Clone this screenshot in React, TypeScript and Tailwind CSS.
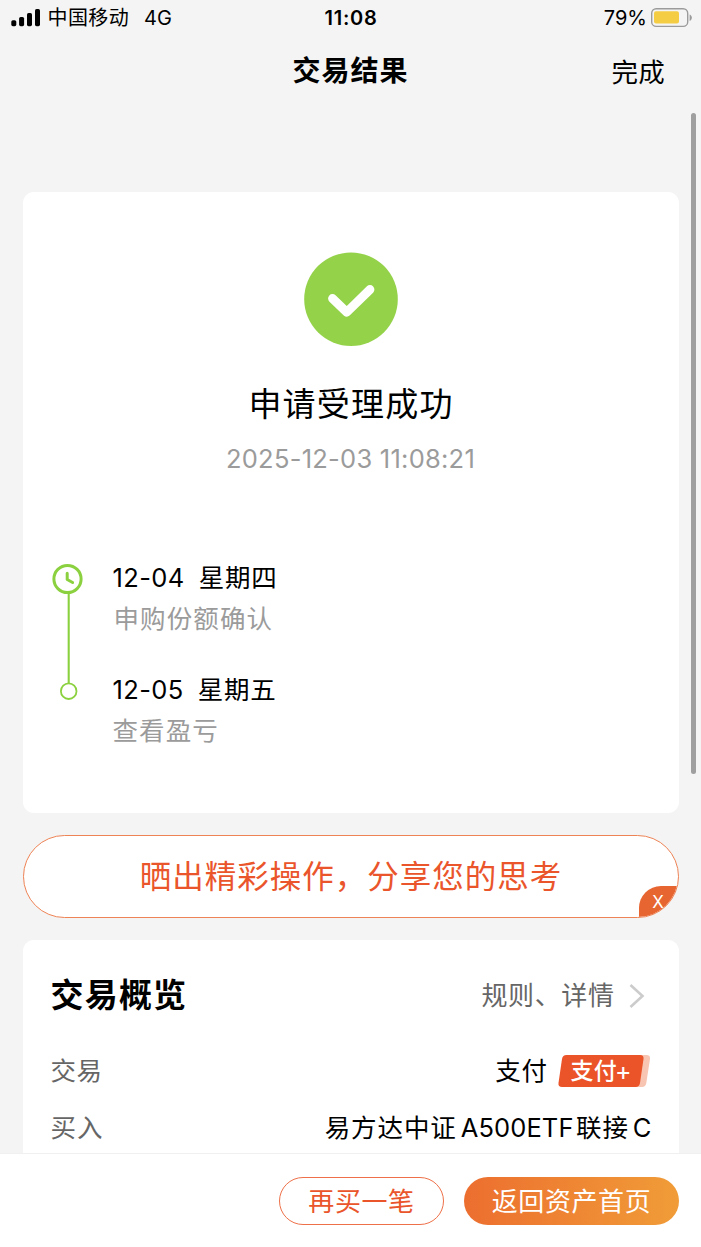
function SignalBars() {
  return (
    <svg className="h-[19px] w-[30px]" viewBox="0 0 30 19">
      <rect x="0.3" y="11.2" width="5" height="6" rx="1.6" />
      <rect x="8.1" y="7.9" width="5" height="9.3" rx="1.6" />
      <rect x="16" y="3.9" width="5" height="13.3" rx="1.6" />
      <rect x="24" y="0" width="5" height="17.2" rx="1.6" />
    </svg>
  );
}

function Battery() {
  return (
    <svg className="h-[20px] w-[42px]" viewBox="0 0 42 20">
      <rect x="1.7" y="0.8" width="36" height="17.6" rx="4.5" fill="none" stroke="#9b9b9b" strokeWidth="1.4" />
      <rect x="4" y="3.2" width="25" height="12.4" rx="2" fill="#f5cd45" />
      <path d="M39.6 6.4c3 1.3 3 5.2 0 6.5z" fill="#9b9b9b" />
    </svg>
  );
}

function StatusBar() {
  return (
    <div className="grid h-9 grid-cols-3 items-center pl-[11px] pr-[9px] text-[20px] leading-9">
      <div className="flex items-center">
        <SignalBars />
        <span className="ml-[6.5px] tracking-[0.4px]">中国移动</span>
        <span className="ml-[15px]">4G</span>
      </div>
      <div className="-ml-px text-center font-semibold tracking-[0.7px]">11:08</div>
      <div className="flex items-center justify-end">
        <span className="mr-[3px]">79%</span>
        <Battery />
      </div>
    </div>
  );
}

function Header() {
  return (
    <header className="grid h-[72px] grid-cols-3 items-center px-9 leading-[71px]">
      <span />
      <h1 className="-mt-px text-center text-[28px] font-bold tracking-[1px]">交易结果</h1>
      <button className="text-right text-[26.5px] tracking-[0.3px]">完成</button>
    </header>
  );
}

function Timeline() {
  return (
    <div className="flex pl-[29px]">
      <svg className="mt-px h-[140px] w-8 shrink-0" viewBox="0 0 32 140" fill="none" stroke="#8bd13f">
        <circle cx="15.5" cy="17" r="13.6" strokeWidth="3" />
        <path d="M15.2 11.3v6.2l5.4 3" strokeWidth="3" strokeLinecap="round" strokeLinejoin="round" />
        <path d="M16.7 31v90" strokeWidth="2.1" />
        <circle cx="16.7" cy="129.2" r="7.8" strokeWidth="1.8" />
      </svg>
      <div className="ml-[29px] flex flex-col">
        <div className="flex h-[34px] items-center text-[25.5px] leading-[34px]">
          <span className="tracking-[0.4px]">12-04</span>
          <span className="ml-[14px] tracking-[0.8px]">星期四</span>
        </div>
        <div className="ml-px mt-[7px] h-[34px] text-[25.5px] leading-[34px] tracking-[1.1px] text-[#9b9b9b]">申购份额确认</div>
        <div className="mt-[37px] flex h-[34px] items-center text-[25.5px] leading-[34px]">
          <span className="tracking-[0.4px]">12-05</span>
          <span className="ml-[14px] tracking-[0.8px]">星期五</span>
        </div>
        <div className="mt-[7px] h-[34px] text-[25.5px] leading-[34px] tracking-[1.1px] text-[#9b9b9b]">查看盈亏</div>
      </div>
    </div>
  );
}

function ResultCard() {
  return (
    <section className="mx-[22.5px] mt-[84px] flex h-[621px] flex-col rounded-[11px] bg-white pt-[60px]">
      <svg className="mx-auto h-[94px] w-[94px]" viewBox="0 0 94 94">
        <circle cx="47" cy="47.2" r="46.8" fill="#94d24a" />
        <path d="M28.5 46.5L42.8 60.2L66 37.5" fill="none" stroke="#fff" strokeWidth="8.8" strokeLinecap="round" strokeLinejoin="round" />
      </svg>
      <h2 className="mt-[36px] h-[44px] pl-px text-center text-[33px] leading-[44px] tracking-[1.2px]">申请受理成功</h2>
      <p className="mt-[16px] h-[34px] text-center text-[25.5px] leading-[34px] tracking-[0.25px] text-[#9b9b9b]">2025-12-03 11:08:21</p>
      <div className="mt-[85px]">
        <Timeline />
      </div>
    </section>
  );
}

function ShareBanner() {
  return (
    <section className="relative mx-[22.5px] mt-[22px] flex h-[83px] items-center justify-center overflow-hidden rounded-[41.5px] border border-[#ee8355] bg-white text-[31.5px] tracking-[1px] text-[#ea552b]">
      <span className="ml-px mt-px">晒出精彩操作，分享您的思考</span>
      <button className="absolute -bottom-px -right-px flex h-8 w-[40px] items-center justify-center rounded-tl-[22px] bg-[#e76531] pt-[2px] text-[17px] text-white">X</button>
    </section>
  );
}

function PayTag() {
  return (
    <span className="relative ml-[10px] flex h-8 w-[93px] items-center">
      <svg className="absolute inset-0 h-8 w-[93px]" viewBox="0 0 93 32">
        <path d="M15 0H88.5Q92.5 0 92 4L88.3 28Q87.7 32 84 32H15z" fill="#f8c5b2" />
        <path d="M8.5 0H82Q86 0 85.5 4L82 28Q81.4 32 77.5 32H4Q0 32 .5 28L4 4Q4.6 0 8.5 0z" fill="#eb5328" />
      </svg>
      <span className="relative ml-[13px] flex items-center text-[23px] font-medium leading-8 tracking-[0.3px] text-white">
        支付<span className="-ml-[2px] text-[25px] font-normal">+</span>
      </span>
    </span>
  );
}

function OverviewCard() {
  return (
    <section className="mx-[22.5px] mt-[22px] flex flex-1 flex-col rounded-t-[11px] bg-white px-[28px] pt-[32px]">
      <div className="flex h-[46px] items-center justify-between">
        <h2 className="mt-[2px] text-[33px] font-bold tracking-[1.2px]">交易概览</h2>
        <div className="flex items-center text-[26px] tracking-[0.6px] text-[#666]">
          <span>规则、详情</span>
          <svg className="ml-[14px] mr-[6px] mt-[2px] h-[26px] w-[16px]" viewBox="0 0 16 26" fill="none" stroke="#ccc" strokeWidth="2.6">
            <path d="M1.5 2L13.5 13L1.5 24" />
          </svg>
        </div>
      </div>
      <div className="mt-[36px] flex h-[34px] items-center justify-between text-[25.5px] tracking-[0.6px]">
        <span className="text-[#666]">交易</span>
        <div className="flex items-center">
          <span>支付</span>
          <PayTag />
        </div>
      </div>
      <div className="mt-[23px] flex h-[34px] items-center justify-between text-[25.5px] tracking-[0.9px]">
        <span className="text-[#666]">买入</span>
        <div className="-mr-px flex items-center">
          <span>易方达中证</span>
          <span className="ml-[4px] tracking-[0.1px]">A500ETF</span>
          <span className="ml-[2.5px]">联接</span>
          <span className="ml-[4px] tracking-normal">C</span>
        </div>
      </div>
    </section>
  );
}

function ActionBar() {
  return (
    <footer className="flex h-[94px] shrink-0 items-start justify-end gap-5 border-t border-[#f0f0f0] bg-white pr-[22px] pt-[23px] text-[26px] tracking-[0.6px]">
      <button className="flex h-12 w-[165px] items-center justify-center rounded-full border border-[#ee7048] text-[#ea552b]">再买一笔</button>
      <button className="flex h-12 w-[215px] items-center justify-center rounded-full bg-linear-to-r from-[#ec6e2f] to-[#f09c38] text-white">返回资产首页</button>
    </footer>
  );
}

export default function App() {
  return (
    <div className="relative flex h-[1247px] w-[701px] flex-col overflow-hidden bg-[#f4f4f4] font-[Inter,'Noto_Sans_CJK_SC',sans-serif] text-black">
      <StatusBar />
      <Header />
      <main className="flex flex-1 flex-col">
        <ResultCard />
        <ShareBanner />
        <OverviewCard />
      </main>
      <ActionBar />
      <div className="absolute right-[5px] top-[113px] h-[661px] w-[5px] rounded-full bg-[#9f9f9f]" />
    </div>
  );
}
